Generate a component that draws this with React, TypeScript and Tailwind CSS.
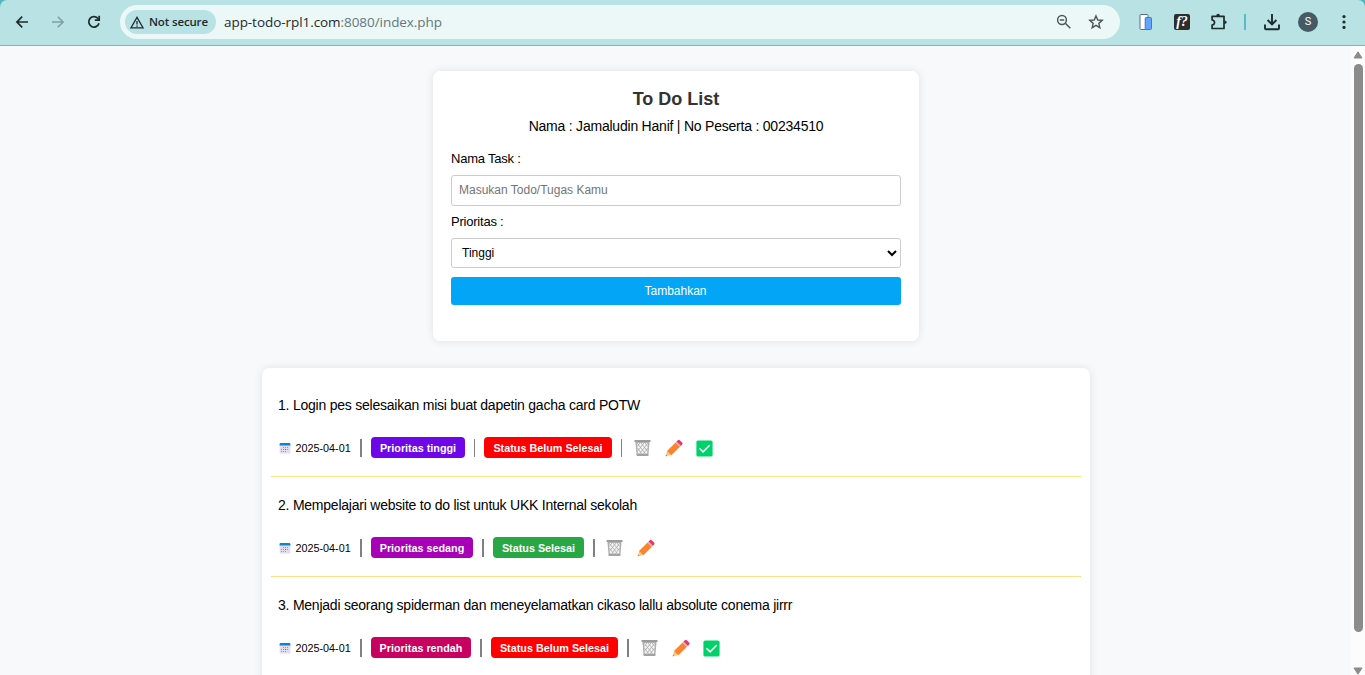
import React from "react";

const Calendar = () => (
  <svg width="12" height="12" viewBox="0 0 12 12" className="shrink-0">
    <rect x="0.6" y="1" width="10.8" height="10.6" rx="1.2" fill="#e3dcec" />
    <path d="M.6 3.4V2.2A1.2 1.2 0 0 1 1.8 1h8.4a1.2 1.2 0 0 1 1.2 1.2v1.2Z" fill="#0a85d1" />
    <g fill="#9a98b2">
      <path d="M4 5h1v1H4zM6 5h1v1H6zM8 5h1v1H8zM2 7h1v1H2zM4 7h1v1H4zM8 7h1v1H8zM2 9h1v1H2zM4 9h1v1H4zM6 9h1v1H6z" />
    </g>
    <path d="M6 7h1v1H6z" fill="#0a85d1" />
  </svg>
);

const Trash = () => (
  <svg width="17" height="18" viewBox="0 0 17 18" className="shrink-0">
    <path d="M1.4 2.5h14.2l-1.2 13.8q-.1.7-.8.7H3.4q-.7 0-.8-.7Z" fill="#b0b0b0" />
    <path d="M3 4h11l-.9 10.6H3.9Z" fill="#f3f3f3" />
    <path d="M3 4l8.4 10.6M7 4l6.2 7.8M11 4l2.6 3.3M3.4 9l4.2 5.6M14 4L5.6 14.6M10 4l-6.2 7.8M6 4L3.4 7.3M13.6 9l-4.2 5.6" stroke="#a8a8a8" strokeWidth="0.8" fill="none" />
    <path d="M.5 1h16v2H.5z" fill="#9b9b9b" />
    <path d="M2.6 15h11.8l-.2 2H2.8z" fill="#a3a3a3" />
  </svg>
);

const Pencil = () => (
  <svg width="18" height="18" viewBox="0 0 18 18" className="shrink-0">
    <path d="M.7 17.3l1.4-5.4 4.2 4.2Z" fill="#fcc476" />
    <path d="M2 12L10.6 3.4l4.4 4.4L6.3 16.3Z" fill="#ff822d" />
    <path d="M10.5 3.5l1.5-1.5 4.4 4.4-1.5 1.5Z" fill="#c3bbd0" />
    <path d="M11.6 2.4l1.2-1.2q1-.9 1.9 0l2.4 2.4q.9 1 0 1.9l-1.2 1.2Z" fill="#f8305f" />
    <path d="M.7 17.3l.4-1.6 1.2 1.2Z" fill="#8d7a70" />
  </svg>
);

const Check = () => (
  <svg width="17" height="17" viewBox="0 0 17 17" className="shrink-0">
    <rect x="0.4" y="0.4" width="16.2" height="16.2" rx="1.7" fill="#00d26a" />
    <path d="M3.9 8.7l3.2 3.1 6.3-6.3" fill="none" stroke="#fff" strokeWidth="1.6" strokeLinecap="round" />
  </svg>
);

type Task = {
  title: string;
  priority: string;
  priorityClass: string;
  done: boolean;
  statusClass: string;
  separatorClass: string;
  actionsClass: string;
};

const tasks: Task[] = [
  {
    title: "1. Login pes selesaikan misi buat dapetin gacha card POTW",
    priority: "Prioritas tinggi",
    priorityClass: "w-[94px] bg-[#6f06e8]",
    done: false,
    statusClass: "w-[128px] bg-[#ff0000]",
    separatorClass: "w-px",
    actionsClass: "ml-3",
  },
  {
    title: "2. Mempelajari website to do list untuk UKK Internal sekolah",
    priority: "Prioritas sedang",
    priorityClass: "w-[102px] bg-[#a800b7]",
    done: true,
    statusClass: "w-[91px] bg-[#28a745]",
    separatorClass: "w-[2px]",
    actionsClass: "ml-[11px]",
  },
  {
    title: "3. Menjadi seorang spiderman dan meneyelamatkan cikaso lallu absolute conema jirrr",
    priority: "Prioritas rendah",
    priorityClass: "w-[100px] bg-[#c8005f]",
    done: false,
    statusClass: "w-[127px] bg-[#ff0000]",
    separatorClass: "w-[2px]",
    actionsClass: "ml-3",
  },
];

function TaskItem({ task }: { task: Task }) {
  return (
    <li className="h-[100px] border-b border-[#ffe08a] pl-[7px] pt-[19px]">
      <p className="h-[18px] whitespace-nowrap text-[14px] leading-[18px] tracking-[-0.23px]">{task.title}</p>
      <div className="mt-[23px] flex h-[21px] items-center text-[10.8px]">
        <span className="ml-px"><Calendar /></span>
        <span className="ml-[4.5px] w-[55.5px] whitespace-nowrap pt-[2px]">{"2025-04-01"}</span>
        <span className="ml-[9px] h-[18px] w-[2px] bg-[#808080]" />
        <span className={`ml-[9px] flex h-[21px] items-center justify-center whitespace-nowrap rounded-[4px] pt-[2px] font-bold text-white ${task.priorityClass}`}>
          {task.priority}
        </span>
        <span className={`mx-[9px] h-[18px] bg-[#808080] ${task.separatorClass}`} />
        <span className={`flex h-[21px] items-center justify-center whitespace-nowrap rounded-[4px] pt-[2px] font-bold text-white ${task.statusClass}`}>
          {task.done ? "Status Selesai" : "Status Belum Selesai"}
        </span>
        <span className={`ml-[9px] h-[18px] bg-[#808080] ${task.separatorClass}`} />
        <span className={`flex items-center pt-px ${task.actionsClass}`}>
          <button><Trash /></button>
          <button className="ml-[13.5px]"><Pencil /></button>
          {!task.done && <button className="ml-[13.5px]"><Check /></button>}
        </span>
      </div>
    </li>
  );
}

function Toolbar() {
  return (
    <div className="h-[46px] shrink-0 bg-[#4fb7bd]">
      <header className="flex h-[46px] items-center rounded-t-[7px] border-b border-[#8cafba] bg-[#b8e2e4] pb-px font-['Open_Sans',sans-serif] text-[#1f2a2c]">
        <svg className="ml-[14px] shrink-0" width="16" height="16" viewBox="0 0 16 16" fill="none" stroke="currentColor" strokeWidth="1.7">
          <path d="M14 8H3M8.2 2.7L2.9 8l5.3 5.3" />
        </svg>
        <svg className="ml-5 shrink-0 text-[#809fa2]" width="16" height="16" viewBox="0 0 16 16" fill="none" stroke="currentColor" strokeWidth="1.6">
          <path d="M2 8h11M7.8 2.7L13.1 8l-5.3 5.3" />
        </svg>
        <svg className="ml-5 shrink-0" width="16" height="16" viewBox="0 0 16 16" fill="none" stroke="currentColor" strokeWidth="1.7">
          <path d="M13 9.2A5.2 5.2 0 1 1 12.2 4.8L13 5.8" />
          <path d="M13.2 1.8v4.4H8.8" />
        </svg>
        <div className="ml-[18px] flex h-[34px] w-[1000px] shrink-0 items-center rounded-full bg-[#ecf8f8] pl-[5px] pr-4">
          <div className="flex h-6 w-[91px] items-center rounded-full bg-[#b8e2e4] pl-[5px]">
            <svg width="14" height="13" viewBox="0 0 14 13" fill="none" stroke="currentColor" strokeWidth="1.3" className="shrink-0">
              <path d="M7 1.4L13 11.8H1Z" />
              <path d="M7 5v3.6M7 9.4v1.3" />
            </svg>
            <span className="ml-[5px] whitespace-nowrap text-[11.5px] font-semibold tracking-[-0.15px]">Not secure</span>
          </div>
          <span className="ml-2 whitespace-nowrap text-[13.5px] tracking-[-0.06px] text-[#1f2a2c]">
            app-todo-rpl1.com<span className="text-[#66777a]">:8080/index.php</span>
          </span>
          <svg className="ml-auto" width="16" height="16" viewBox="0 0 16 16" fill="none" stroke="#4d5658" strokeWidth="1.5">
            <circle cx="6" cy="6" r="4.4" />
            <path d="M9.3 9.3l5 5M3.8 6h4.4" />
          </svg>
          <svg className="ml-4" width="16" height="16" viewBox="0 0 16 16" fill="none" stroke="#4d5658" strokeWidth="1.4">
            <path d="M8 1.9l1.75 4.1 4.45.4-3.35 2.95 1 4.35L8 11.4l-3.85 2.3 1-4.35L1.8 6.4 6.25 6Z" />
          </svg>
        </div>
        <svg className="ml-[18px] shrink-0" width="16" height="18" viewBox="0 0 16 18">
          <rect x="2" y="1.5" width="8" height="15" rx="1" fill="#fff" stroke="#5b6b8c" />
          <rect x="7.2" y="4.5" width="6.3" height="12" rx="1" fill="#62a4ff" stroke="#3f77c9" />
        </svg>
        <span className="ml-5 flex h-4 w-4 shrink-0 items-center justify-center rounded-[2px] bg-[#2d2d2d] font-['Liberation_Serif',serif] text-[14px] font-bold italic leading-4 text-white">f?</span>
        <svg className="ml-[20px] shrink-0" width="18" height="18" viewBox="0 0 18 18" fill="none" stroke="currentColor" strokeWidth="1.7">
          <path d="M2.1 3.3H14v12.2H2.1v-3.4c3.2-.7 3.2-4.6 0-5.2Z" strokeLinejoin="round" />
          <path d="M6.3 3q0-2.3 1.8-2.3T9.9 3zM14.4 7.5q2.3 0 2.3 1.8t-2.3 1.8z" fill="currentColor" stroke="none" />
        </svg>
        <span className="ml-[16px] h-4 w-[2px] shrink-0 bg-[#56bcc5]" />
        <svg className="ml-[18px] shrink-0" width="16" height="18" viewBox="0 0 16 18" fill="none" stroke="currentColor" strokeWidth="1.9">
          <path d="M8 1v10M3.6 7L8 11.4 12.4 7M1 11.5v3.7q0 1 1 1h12q1 0 1-1v-3.7" />
        </svg>
        <span className="ml-[18px] flex h-5 w-5 shrink-0 items-center justify-center rounded-full bg-[#455a64] font-[Roboto,sans-serif] text-[11px] text-white">S</span>
        <svg className="ml-[24px] shrink-0" width="4" height="16" viewBox="0 0 4 16" fill="currentColor">
          <circle cx="2" cy="2.6" r="1.6" /><circle cx="2" cy="8" r="1.6" /><circle cx="2" cy="13.4" r="1.6" />
        </svg>
      </header>
    </div>
  );
}

function TaskForm() {
  return (
    <section className="ml-[433px] mt-[25px] h-[270px] w-[486px] shrink-0 rounded-[7px] bg-white px-[18px] pt-[18px] shadow-[0_0_9px_rgba(0,0,0,0.1)]">
      <h1 className="text-center text-[18px] font-bold leading-5 text-[#333]">To Do List</h1>
      <p className="mt-[9px] whitespace-nowrap text-center text-[14px] leading-4 tracking-[-0.22px]">Nama : Jamaludin Hanif | No Peserta : 00234510</p>
      <label className="mt-[17px] block text-[13px] leading-4 tracking-[-0.22px]">Nama Task :</label>
      <input
        className="mt-[8px] block h-[31px] w-full rounded-[3px] border border-[#ccc] bg-white px-[7px] pb-[2px] text-[12px] placeholder:text-[#757575]"
        placeholder="Masukan Todo/Tugas Kamu"
      />
      <label className="mt-[8px] block text-[13px] leading-4 tracking-[-0.22px]">Prioritas :</label>
      <div className="mt-[8px] flex h-[30px] w-full items-center justify-between rounded-[3px] border border-[#ccc] bg-white pl-[10px] pr-[3px] text-[12px]">
        <span>Tinggi</span>
        <svg width="10" height="8" viewBox="0 0 10 8" fill="none" stroke="#000" strokeWidth="2">
          <path d="M1 2l4 4 4-4" />
        </svg>
      </div>
      <button className="mt-[9px] flex h-[28px] w-full items-center justify-center rounded-[3px] bg-[#03a5f7] pr-px text-[12px] text-white">Tambahkan</button>
    </section>
  );
}

export default function App() {
  return (
    <div className="flex h-[675px] w-[1365px] flex-col overflow-hidden bg-[#f8f9fb] font-['Liberation_Sans',Arial,sans-serif] text-black">
      <Toolbar />
      <div className="flex min-h-0 flex-1">
        <main className="flex min-w-0 flex-1 flex-col overflow-hidden">
          <TaskForm />
          <ul className="ml-[262px] mt-[27px] h-[420px] w-[828px] shrink-0 rounded-[7px] bg-white px-[9px] pt-[9px] shadow-[0_0_9px_rgba(0,0,0,0.1)]">
            {tasks.map((task) => (
              <TaskItem key={task.title} task={task} />
            ))}
          </ul>
        </main>
        <aside className="flex w-[14px] shrink-0 flex-col items-center bg-[#fcfcfc] pt-[5px]">
          <svg width="10" height="8" viewBox="0 0 10 8" className="shrink-0"><path d="M5 .8L9 7H1Z" fill="#8b8b8b" stroke="#8b8b8b" strokeLinejoin="round" /></svg>
          <div className="mt-[5px] h-[568px] w-[9px] shrink-0 rounded-full bg-[#8b8b8b]" />
          <svg width="10" height="8" viewBox="0 0 10 8" className="mt-[35px] shrink-0"><path d="M5 7.2L9 1H1Z" fill="#8b8b8b" stroke="#8b8b8b" strokeLinejoin="round" /></svg>
        </aside>
      </div>
    </div>
  );
}
